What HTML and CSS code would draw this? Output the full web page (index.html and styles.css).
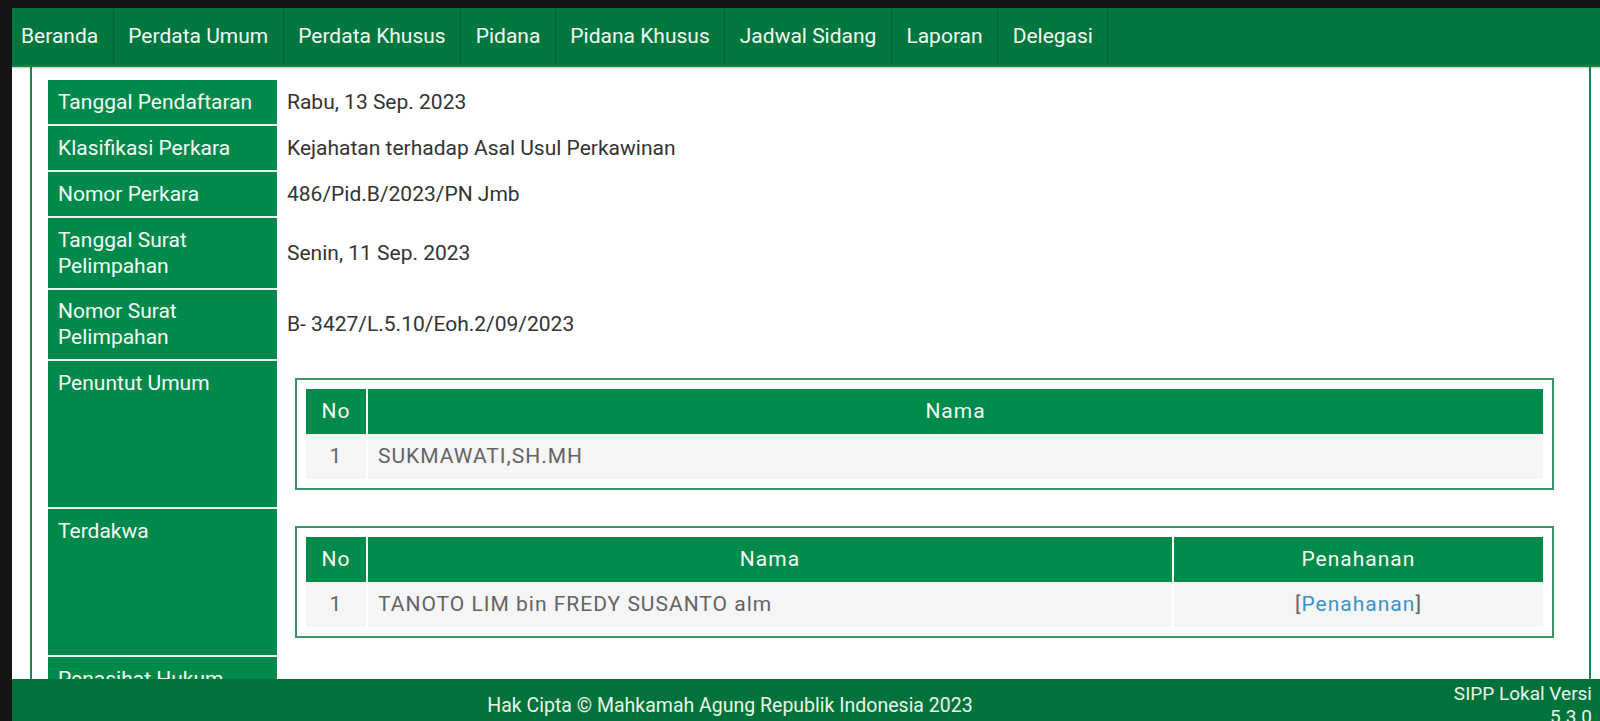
FILE: index.html
```html
<!DOCTYPE html>
<html>
<head>
    <meta charset="utf-8">
    <meta name="viewport" content="width=device-width, initial-scale=1.0">
    <title>SIPP - Detail Perkara</title>
    <link rel="stylesheet" href="styles.css">
</head>
<body>
    <div class="app">
        <nav class="topnav">
            <a href="#" class="first">Beranda</a>
            <a href="#">Perdata Umum</a>
            <a href="#">Perdata Khusus</a>
            <a href="#">Pidana</a>
            <a href="#">Pidana Khusus</a>
            <a href="#">Jadwal Sidang</a>
            <a href="#">Laporan</a>
            <a href="#">Delegasi</a>
        </nav>

        <main class="main">
            <div class="panel">
                <table class="detail">
                    <tr>
                        <td class="label">Tanggal Pendaftaran</td>
                        <td class="value">Rabu, 13 Sep. 2023</td>
                    </tr>
                    <tr>
                        <td class="label">Klasifikasi Perkara</td>
                        <td class="value">Kejahatan terhadap Asal Usul Perkawinan</td>
                    </tr>
                    <tr>
                        <td class="label">Nomor Perkara</td>
                        <td class="value">486/Pid.B/2023/PN Jmb</td>
                    </tr>
                    <tr>
                        <td class="label">Tanggal Surat Pelimpahan</td>
                        <td class="value">Senin, 11 Sep. 2023</td>
                    </tr>
                    <tr>
                        <td class="label">Nomor Surat Pelimpahan</td>
                        <td class="value">B- 3427/L.5.10/Eoh.2/09/2023</td>
                    </tr>
                    <tr>
                        <td class="label top">Penuntut Umum</td>
                        <td class="value">
                            <div class="box">
                                <table class="list">
                                    <thead>
                                        <tr>
                                            <th class="no">No</th>
                                            <th>Nama</th>
                                        </tr>
                                    </thead>
                                    <tbody>
                                        <tr>
                                            <td class="no">1</td>
                                            <td>SUKMAWATI,SH.MH</td>
                                        </tr>
                                    </tbody>
                                </table>
                            </div>
                        </td>
                    </tr>
                    <tr>
                        <td class="label top">Terdakwa</td>
                        <td class="value">
                            <div class="box">
                                <table class="list">
                                    <thead>
                                        <tr>
                                            <th class="no">No</th>
                                            <th>Nama</th>
                                            <th class="penahanan">Penahanan</th>
                                        </tr>
                                    </thead>
                                    <tbody>
                                        <tr>
                                            <td class="no">1</td>
                                            <td>TANOTO LIM bin FREDY SUSANTO alm</td>
                                            <td class="center">[<a href="#">Penahanan</a>]</td>
                                        </tr>
                                    </tbody>
                                </table>
                            </div>
                        </td>
                    </tr>
                    <tr>
                        <td class="label top">Penasihat Hukum</td>
                        <td class="value"></td>
                    </tr>
                </table>
            </div>
        </main>

        <footer class="footer">
            <div class="copy">Hak Cipta &copy; Mahkamah Agung Republik Indonesia 2023</div>
            <div class="version">SIPP Lokal Versi<br>5.3.0</div>
        </footer>
    </div>
</body>
</html>
```

FILE: styles.css
```css
html, body {
    margin: 0;
    height: 100%;
    overflow: hidden;
}
body {
    background: #151517;
    font-family: Roboto, "Liberation Sans", Arial, sans-serif;
    font-size: 21px;
}

.app {
    margin: 8px 0 0 12px;
    display: grid;
    grid-template-rows: 59px 612px auto;
    background: #000;
}

/* menu atas */
.topnav {
    display: flex;
    background: #00773e;
    border-bottom: 2px solid #0b8446;
    box-shadow: 0 1px 2px rgba(0,0,0,.25);
    box-sizing: border-box;
    position: relative;
    z-index: 1;
}
.topnav a {
    display: flex;
    align-items: center;
    padding: 0 14.5px 2px;
    color: #f2f8f4;
    text-decoration: none;
    border-right: 1px solid #006532;
}
.topnav a.first {
    padding-left: 9px;
}

.main {
    background: #fff;
    overflow: hidden;
}
.panel {
    margin: 0 9px 0 18px;
    padding: 13px 17px 200px 16px;
    border-left: 2px solid #17884c;
    border-right: 2px solid #17884c;
}

/* tabel detail perkara */
table.detail {
    width: 100%;
    border-collapse: collapse;
}
.detail td.label {
    width: 209px;
    padding: 8.75px 10px;
    line-height: 26px;
    background: #01894b;
    color: #f4faf6;
    border-bottom: 2px solid #e9f5ee;
    vertical-align: middle;
}
.detail td.label.top {
    vertical-align: top;
}
.detail td.value {
    padding: 10px;
    line-height: 24px;
    color: #333;
    vertical-align: middle;
    border-bottom: 2px solid #fff;
}

.box {
    margin: 7px 8px 7px 8px;
    padding: 9px;
    border: 2px solid #3a9466;
}

table.list {
    width: 100%;
    border-collapse: separate;
    border-spacing: 0;
}
.list th {
    background: #018b4b;
    color: #f4faf6;
    font-weight: normal;
    letter-spacing: 1px;
    padding: 10px;
    line-height: 25px;
    text-align: center;
    border-left: 2px solid #fff;
}
.list td {
    background: #f5f5f5;
    color: #646464;
    letter-spacing: 1px;
    padding: 10px;
    line-height: 25px;
    border-left: 2px solid #fff;
}
.list th:first-child,
.list td:first-child {
    border-left: none;
}
.list th.no,
.list td.no {
    width: 40px;
    text-align: center;
}
.list th.penahanan {
    width: 30%;
}
.list td.center {
    text-align: center;
}
.list a {
    color: #3a93c3;
    text-decoration: none;
}

/* footer */
.footer {
    display: flex;
    align-items: center;
    min-height: 52px;
    background: #00723a;
    color: #e8f4ec;
    font-size: 19px;
}
.footer .copy {
    flex: 1;
    text-align: center;
    font-size: 19.5px;
}
.footer .version {
    width: 144px;
    padding: 3px 8px 3px 0;
    text-align: right;
    line-height: 23px;
}
```
